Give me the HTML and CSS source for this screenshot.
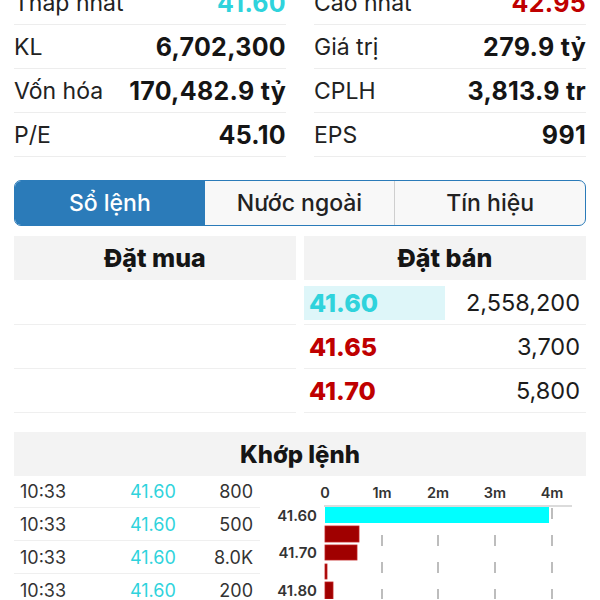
FILE: index.html
```html
<!DOCTYPE html>
<html lang="vi">
<head>
    <meta charset="UTF-8">
    <meta name="viewport" content="width=device-width, initial-scale=1.0">
    <title>Chi tiết cổ phiếu</title>
    <link rel="stylesheet" href="styles.css">
</head>
<body>
    <div class="page">
        <!-- Thong tin tong quan -->
        <div class="stats">
            <div class="stat"><span class="label">Thấp nhất</span><span class="value up">41.60</span></div>
            <div class="stat"><span class="label">Cao nhất</span><span class="value down">42.95</span></div>
            <div class="stat"><span class="label">KL</span><span class="value">6,702,300</span></div>
            <div class="stat"><span class="label">Giá trị</span><span class="value">279.9 tỷ</span></div>
            <div class="stat"><span class="label">Vốn hóa</span><span class="value">170,482.9 tỷ</span></div>
            <div class="stat"><span class="label">CPLH</span><span class="value">3,813.9 tr</span></div>
            <div class="stat"><span class="label">P/E</span><span class="value">45.10</span></div>
            <div class="stat"><span class="label">EPS</span><span class="value">991</span></div>
        </div>

        <div class="tabs">
            <div class="tab active">Sổ lệnh</div>
            <div class="tab">Nước ngoài</div>
            <div class="tab">Tín hiệu</div>
        </div>

        <!-- So lenh -->
        <div class="book">
            <div class="book-side">
                <div class="book-head">Đặt mua</div>
                <div class="book-row"></div>
                <div class="book-row"></div>
                <div class="book-row"></div>
            </div>
            <div class="book-side">
                <div class="book-head">Đặt bán</div>
                <div class="book-row">
                    <span class="price up current">41.60</span>
                    <span class="qty">2,558,200</span>
                </div>
                <div class="book-row">
                    <span class="price down">41.65</span>
                    <span class="qty">3,700</span>
                </div>
                <div class="book-row">
                    <span class="price down">41.70</span>
                    <span class="qty">5,800</span>
                </div>
            </div>
        </div>

        <!-- Khop lenh -->
        <div class="match">
            <div class="match-head">Khớp lệnh</div>
            <div class="match-body">
                <div class="trades">
                    <div class="trade"><span class="time">10:33</span><span class="trade-price">41.60</span><span class="trade-vol">800</span></div>
                    <div class="trade"><span class="time">10:33</span><span class="trade-price">41.60</span><span class="trade-vol">500</span></div>
                    <div class="trade"><span class="time">10:33</span><span class="trade-price">41.60</span><span class="trade-vol">8.0K</span></div>
                    <div class="trade"><span class="time">10:33</span><span class="trade-price">41.60</span><span class="trade-vol">200</span></div>
                </div>
                <svg class="chart" width="326" height="124" viewBox="0 0 326 124">
                    <g class="axis-labels">
                        <text x="65" y="23">0</text>
                        <text x="122" y="23">1m</text>
                        <text x="178" y="23">2m</text>
                        <text x="235" y="23">3m</text>
                        <text x="292" y="23">4m</text>
                    </g>
                    <line x1="64" y1="31" x2="312" y2="31" stroke="#cfcfcf" stroke-width="1.5"/>
                    <g stroke="#a8a8a8" stroke-width="1.5" stroke-dasharray="11 16">
                        <line x1="122" y1="33" x2="122" y2="124"/>
                        <line x1="178" y1="33" x2="178" y2="124"/>
                        <line x1="235" y1="33" x2="235" y2="124"/>
                        <line x1="292" y1="33" x2="292" y2="124"/>
                    </g>
                    <rect x="65" y="32" width="224" height="16" fill="#00ffff"/>
                    <g fill="#a00000" stroke="#c02020" stroke-width="0.8">
                        <rect x="65" y="51" width="34" height="16"/>
                        <rect x="65" y="70" width="32" height="15"/>
                        <rect x="65" y="89" width="2" height="15"/>
                        <rect x="65" y="107" width="8" height="17"/>
                    </g>
                    <g class="row-labels">
                        <text x="57" y="46">41.60</text>
                        <text x="57" y="83">41.70</text>
                        <text x="57" y="121">41.80</text>
                    </g>
                </svg>
            </div>
        </div>
    </div>
</body>
</html>
```

FILE: styles.css
```css
body {
    font-family: Inter, "Noto Sans", sans-serif;
    margin: 0;
    padding: 0;
    background-color: #fff;
    color: #1c1c1c;
    height: 600px;
    overflow: hidden;
}

.page {
    padding: 0 14px;
}

/* Thong tin tong quan */
.stats {
    display: grid;
    grid-template-columns: 1fr 1fr;
    column-gap: 28px;
    margin-top: -19px;
}

.stat {
    display: flex;
    justify-content: space-between;
    align-items: center;
    height: 43px;
    border-bottom: 1px solid #ededed;
    font-size: 23px;
}

.stat .label {
    color: #222;
}

.stat .value {
    font-size: 25px;
    font-weight: 700;
    letter-spacing: 0.3px;
    color: #151515;
}

.up {
    color: #2fd3dc !important;
}

.down {
    color: #bf0000 !important;
}

/* Tabs */
.tabs {
    display: flex;
    margin-top: 23px;
    height: 44px;
    border: 1.5px solid #2b7bb9;
    border-radius: 7px;
    overflow: hidden;
    background-color: #f8f8f8;
}

.tab {
    flex: 1;
    display: flex;
    align-items: center;
    justify-content: center;
    font-size: 23px;
    font-weight: 500;
    color: #222;
    border-left: 1px solid #cfcfcf;
}

.tab:first-child {
    border-left: none;
}

.tab.active {
    background-color: #2b7bb9;
    color: #fff;
}

.tab.active + .tab {
    border-left: none;
}

/* So lenh */
.book {
    display: grid;
    grid-template-columns: 1fr 1fr;
    column-gap: 8px;
    margin-top: 10px;
}

.book-head {
    height: 44px;
    display: flex;
    align-items: center;
    justify-content: center;
    background-color: #f3f3f3;
    font-size: 25px;
    font-weight: 800;
    color: #151515;
    margin-bottom: 1px;
}

.book-row {
    display: grid;
    grid-template-columns: 1fr 1fr;
    align-items: center;
    height: 43px;
    border-bottom: 1px solid #efefef;
    font-size: 23.5px;
}

.book-row .price {
    font-size: 25px;
    font-weight: 800;
    padding-left: 5px;
    height: 34px;
    line-height: 34px;
}

.book-row .price.current {
    background-color: #def6f9;
}

.book-row .qty {
    text-align: right;
    padding-right: 6px;
    color: #1c1c1c;
}

/* Khop lenh */
.match {
    margin-top: 19px;
}

.match-head {
    height: 44px;
    display: flex;
    align-items: center;
    justify-content: center;
    background-color: #f3f3f3;
    font-size: 24px;
    font-weight: 800;
    color: #151515;
}

.match-body {
    display: flex;
    margin-top: -1px;
}

.trades {
    width: 246px;
    flex: none;
}

.trade {
    display: flex;
    align-items: center;
    height: 32px;
    border-bottom: 1px solid #efefef;
    font-size: 18px;
    color: #333;
}

.trade .time {
    width: 110px;
    padding-left: 6px;
}

.trade .trade-price {
    width: 70px;
    color: #2fd3dc;
}

.trade .trade-vol {
    flex: 1;
    text-align: right;
    padding-right: 7px;
}

.chart {
    display: block;
    flex: none;
}

.chart text {
    font-family: Inter, "Noto Sans", sans-serif;
    font-weight: 600;
    fill: #333;
}

.axis-labels text {
    font-size: 14.5px;
    text-anchor: middle;
}

.row-labels text {
    font-size: 15px;
    text-anchor: end;
}
```
